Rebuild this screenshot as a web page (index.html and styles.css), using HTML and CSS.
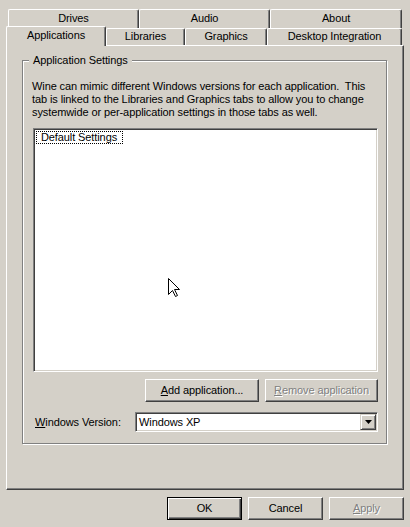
FILE: index.html
```html
<!DOCTYPE html>
<html>
<head>
<meta charset="utf-8">
<link rel="stylesheet" href="styles.css">
</head>
<body>
<div class="dialog">
  <div class="tabs">
    <div class="tabrow back">
      <div class="tab w-drives">Drives</div>
      <div class="tab w-audio">Audio</div>
      <div class="tab w-about">About</div>
    </div>
    <div class="tabrow front">
      <div class="tab sel w-apps">Applications</div>
      <div class="tab w-libs">Libraries</div>
      <div class="tab w-gfx">Graphics</div>
      <div class="tab w-desk">Desktop Integration</div>
    </div>
  </div>
  <div class="panel">
    <div class="group">
      <span class="legend">Application Settings</span>
      <p class="desc">Wine can mimic different Windows versions for each application.&nbsp; This<br>tab is linked to the Libraries and Graphics tabs to allow you to change<br>systemwide or per-application settings in those tabs as well.</p>
      <div class="listbox"><span class="item">Default Settings</span></div>
      <div class="btnrow">
        <div class="btn w-add"><u>A</u>dd application...</div>
        <div class="btn disabled w-remove"><u>R</u>emove application</div>
      </div>
      <div class="verrow">
        <span class="label"><u>W</u>indows Version:</span>
        <div class="combo">
          <span class="combo-text">Windows XP</span>
          <span class="drop"><svg width="7" height="4" viewBox="0 0 7 4"><path d="M0 0h7L3.5 4z" fill="#000"/></svg></span>
        </div>
      </div>
    </div>
  </div>
  <div class="footer">
    <div class="btn default w-foot">OK</div>
    <div class="btn w-foot">Cancel</div>
    <div class="btn disabled w-foot"><u>A</u>pply</div>
  </div>
  <svg class="cursor" width="13" height="20" viewBox="0 0 13 20"><path d="M0.5 0.5V16.5L4.5 12.5L7.5 18.5L9.5 17.5L6.5 11.5H11.5Z" fill="#fff" stroke="#000" stroke-width="1"/></svg>
</div>
</body>
</html>
```

FILE: styles.css
```css
html, body {
  margin: 0;
  padding: 0;
  background: #d4d0c8;
}
body {
  width: 410px;
  height: 527px;
  overflow: hidden;
  font-family: "Liberation Sans", Arial, sans-serif;
  font-size: 11px;
  letter-spacing: -0.1px;
  color: #000;
}
.dialog {
  position: relative;
  width: 410px;
  height: 527px;
}
.tabs {
  padding-top: 9px;
}
.tabrow {
  display: flex;
  align-items: flex-start;
}
.back {
  margin-left: 8px;
  height: 19px;
}
.front {
  margin-left: 6px;
  height: 17px;
}
.tab {
  box-sizing: border-box;
  background: #d4d0c8;
  border-top: 1px solid #fff;
  border-left: 1px solid #fff;
  border-right: 1px solid #404040;
  box-shadow: inset -1px 0 #808080;
  border-radius: 2px 2px 0 0;
  text-align: center;
  white-space: nowrap;
}
.back .tab {
  height: 19px;
  line-height: 17px;
}
.front .tab {
  height: 17px;
  line-height: 15px;
}
.front .tab.sel {
  position: relative;
  z-index: 1;
  height: 20px;
  line-height: 17px;
  margin-top: -2px;
}
.w-drives { width: 131px; }
.w-audio { width: 131px; }
.w-about { width: 132px; }
.w-apps { width: 100px; }
.w-libs { width: 79px; }
.w-gfx { width: 82px; }
.w-desk { width: 135px; }

.panel {
  box-sizing: border-box;
  margin-left: 6px;
  width: 398px;
  height: 445px;
  border-top: 1px solid #fff;
  border-left: 1px solid #fff;
  border-right: 1px solid #404040;
  border-bottom: 1px solid #404040;
  box-shadow: inset -1px -1px #808080;
  overflow: hidden;
  padding-top: 14px;
  padding-left: 15px;
}
.group {
  position: relative;
  box-sizing: border-box;
  width: 365px;
  height: 384px;
  border: 1px solid #808080;
  box-shadow: inset 1px 1px #fff, 1px 1px #fff;
  padding-right: 8px;
}
.legend {
  position: absolute;
  top: -7px;
  left: 6px;
  padding: 0 4px;
  line-height: 13px;
  background: #d4d0c8;
  white-space: nowrap;
}
.desc {
  margin: 19px 0 0 9px;
  line-height: 13px;
  white-space: nowrap;
}
.listbox {
  box-sizing: border-box;
  margin: 9px 0 0 10px;
  width: 345px;
  height: 244px;
  background: #fff;
  border-top: 1px solid #808080;
  border-left: 1px solid #808080;
  border-right: 1px solid #fff;
  border-bottom: 1px solid #fff;
  box-shadow: inset 1px 1px #404040, inset -1px -1px #d4d0c8;
  padding: 2px 0 0 2px;
}
.item {
  display: inline-block;
  border: 1px dotted #000;
  padding: 0 5px 0 4px;
  line-height: 11px;
  white-space: nowrap;
}
.btnrow {
  display: flex;
  justify-content: flex-end;
  gap: 6px;
  margin-top: 7px;
}
.btn {
  box-sizing: border-box;
  height: 23px;
  line-height: 21px;
  text-align: center;
  background: #d4d0c8;
  border-top: 1px solid #fff;
  border-left: 1px solid #fff;
  border-right: 1px solid #404040;
  border-bottom: 1px solid #404040;
  box-shadow: inset -1px -1px #808080;
  white-space: nowrap;
}
.btn.default {
  border: 1px solid #000;
  box-shadow: inset 1px 1px #fff, inset -1px -1px #404040, inset -2px -2px #808080;
}
.btn.disabled {
  color: #808080;
  text-shadow: 1px 1px #fff;
}
.w-add { width: 114px; }
.w-remove { width: 113px; }
.w-foot { width: 75px; }

.verrow {
  display: flex;
  align-items: center;
  margin-top: 10px;
}
.label {
  margin-left: 12px;
  white-space: nowrap;
}
.combo {
  box-sizing: border-box;
  margin-left: auto;
  width: 243px;
  height: 20px;
  display: flex;
  align-items: center;
  background: #fff;
  border-top: 1px solid #808080;
  border-left: 1px solid #808080;
  border-right: 1px solid #fff;
  border-bottom: 1px solid #fff;
  box-shadow: inset 1px 1px #404040, inset -1px -1px #d4d0c8;
  padding: 1px;
}
.combo-text {
  flex: 1;
  padding-left: 2px;
  line-height: 16px;
}
.drop {
  box-sizing: border-box;
  width: 16px;
  height: 16px;
  display: flex;
  align-items: center;
  justify-content: center;
  background: #d4d0c8;
  border-top: 1px solid #d4d0c8;
  border-left: 1px solid #d4d0c8;
  border-right: 1px solid #404040;
  border-bottom: 1px solid #404040;
  box-shadow: inset 1px 1px #fff, inset -1px -1px #808080;
}
.drop svg {
  display: block;
}
.footer {
  display: flex;
  justify-content: flex-end;
  gap: 6px;
  margin-top: 7px;
  padding-right: 6px;
}
.cursor {
  position: absolute;
  left: 168px;
  top: 278px;
}
```
